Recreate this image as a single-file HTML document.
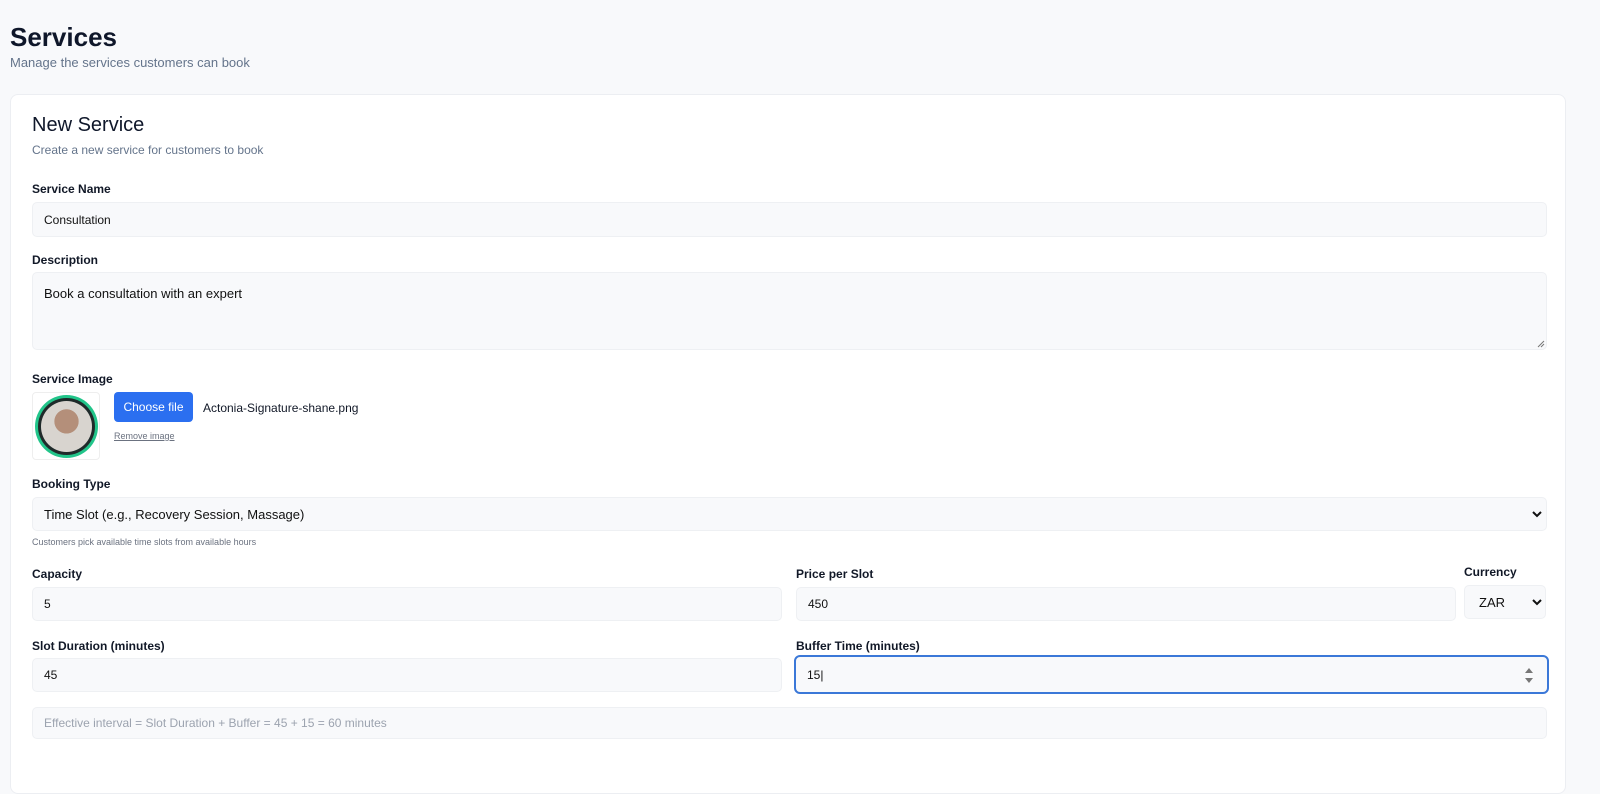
<!DOCTYPE html><html><head><style>
*{box-sizing:border-box;margin:0;padding:0}
body{width:1600px;height:763px;background:#f8f9fb;font-family:"Liberation Sans",sans-serif;position:relative;overflow:hidden;color:#111827}
.a{position:absolute}
.h1{left:10px;top:22px;font-size:26px;font-weight:bold;color:#0f172a}
.sub{left:10px;top:55px;font-size:13px;color:#64748b}
.card{left:10px;top:94px;width:1556px;height:700px;background:#fff;border:1px solid #eceef2;border-radius:8px}
.lbl{font-size:12px;font-weight:bold;color:#111827}
.in{background:#f8f9fb;border:1px solid #eef0f3;border-radius:5px;font-size:12px;padding-left:11px;display:flex;align-items:center;color:#111}
</style></head><body>
<div class="a h1">Services</div>
<div class="a sub">Manage the services customers can book</div>
<div class="a card"></div>
<div class="a" style="left:32px;top:114px;font-size:20px;color:#0f172a">New Service</div>
<div class="a" style="left:32px;top:143px;font-size:12px;color:#64748b">Create a new service for customers to book</div>
<div class="a lbl" style="left:32px;top:182px">Service Name</div>
<div class="a in" style="left:32px;top:202px;width:1515px;height:35px">Consultation</div>
<div class="a lbl" style="left:32px;top:253px">Description</div>
<div class="a in" style="left:32px;top:272px;width:1515px;height:78px;align-items:flex-start;padding-top:13px;font-size:13px">Book a consultation with an expert</div>
<svg class="a" style="left:1537px;top:340px" width="8" height="8"><path d="M1 7L7 1M4 7L7 4" stroke="#777" stroke-width="1"/></svg>
<div class="a lbl" style="left:32px;top:372px">Service Image</div>
<div class="a" style="left:32px;top:392px;width:68px;height:68px;border:1px solid #eee;border-radius:4px"></div>
<div class="a" style="left:35px;top:395px;width:63px;height:63px;border-radius:50%;background:#22c58a"></div>
<div class="a" style="left:38px;top:398px;width:57px;height:57px;border-radius:50%;background:#1f2a2a"></div>
<div class="a" style="left:41px;top:401px;width:51px;height:51px;border-radius:50%;background:radial-gradient(circle at 50% 40%,#b48f7a 0 30%,#d8d4cf 31%)"></div>
<div class="a" style="left:114px;top:392px;width:79px;height:30px;background:#2b6ff0;border-radius:4px;color:#fff;font-size:12px;display:flex;align-items:center;justify-content:center">Choose file</div>
<div class="a" style="left:203px;top:401px;font-size:12px">Actonia-Signature-shane.png</div>
<div class="a" style="left:114px;top:431px;font-size:9px;color:#6b7280;text-decoration:underline">Remove image</div>
<div class="a lbl" style="left:32px;top:477px">Booking Type</div>
<div class="a in" style="left:32px;top:497px;width:1515px;height:34px;font-size:13px">Time Slot (e.g., Recovery Session, Massage)</div>
<svg class="a" style="left:1532px;top:510px" width="10" height="8"><path d="M1 2L5 6L9 2" stroke="#111" stroke-width="2" fill="none"/></svg>
<div class="a" style="left:32px;top:537px;font-size:9px;color:#6b7280">Customers pick available time slots from available hours</div>
<div class="a lbl" style="left:32px;top:567px">Capacity</div>
<div class="a in" style="left:32px;top:587px;width:750px;height:34px">5</div>
<div class="a lbl" style="left:796px;top:567px">Price per Slot</div>
<div class="a in" style="left:796px;top:587px;width:660px;height:34px">450</div>
<div class="a lbl" style="left:1464px;top:565px">Currency</div>
<div class="a in" style="left:1464px;top:585px;width:82px;height:34px;font-size:13px;padding-left:14px">ZAR</div>
<svg class="a" style="left:1532px;top:598px" width="10" height="8"><path d="M1 2L5 6L9 2" stroke="#111" stroke-width="2" fill="none"/></svg>
<div class="a lbl" style="left:32px;top:639px">Slot Duration (minutes)</div>
<div class="a in" style="left:32px;top:658px;width:750px;height:34px">45</div>
<div class="a lbl" style="left:796px;top:639px">Buffer Time (minutes)</div>
<div class="a in" style="left:794px;top:655px;width:755px;height:39px;border:2px solid #3b78d8;border-radius:6px">15|</div>
<svg class="a" style="left:1524px;top:667px" width="10" height="17"><path d="M1 6L5 1L9 6Z M1 11L5 16L9 11Z" fill="#777"/></svg>
<div class="a in" style="left:32px;top:707px;width:1515px;height:32px;color:#9ca3af">Effective interval = Slot Duration + Buffer = 45 + 15 = 60 minutes</div>
</body></html>
